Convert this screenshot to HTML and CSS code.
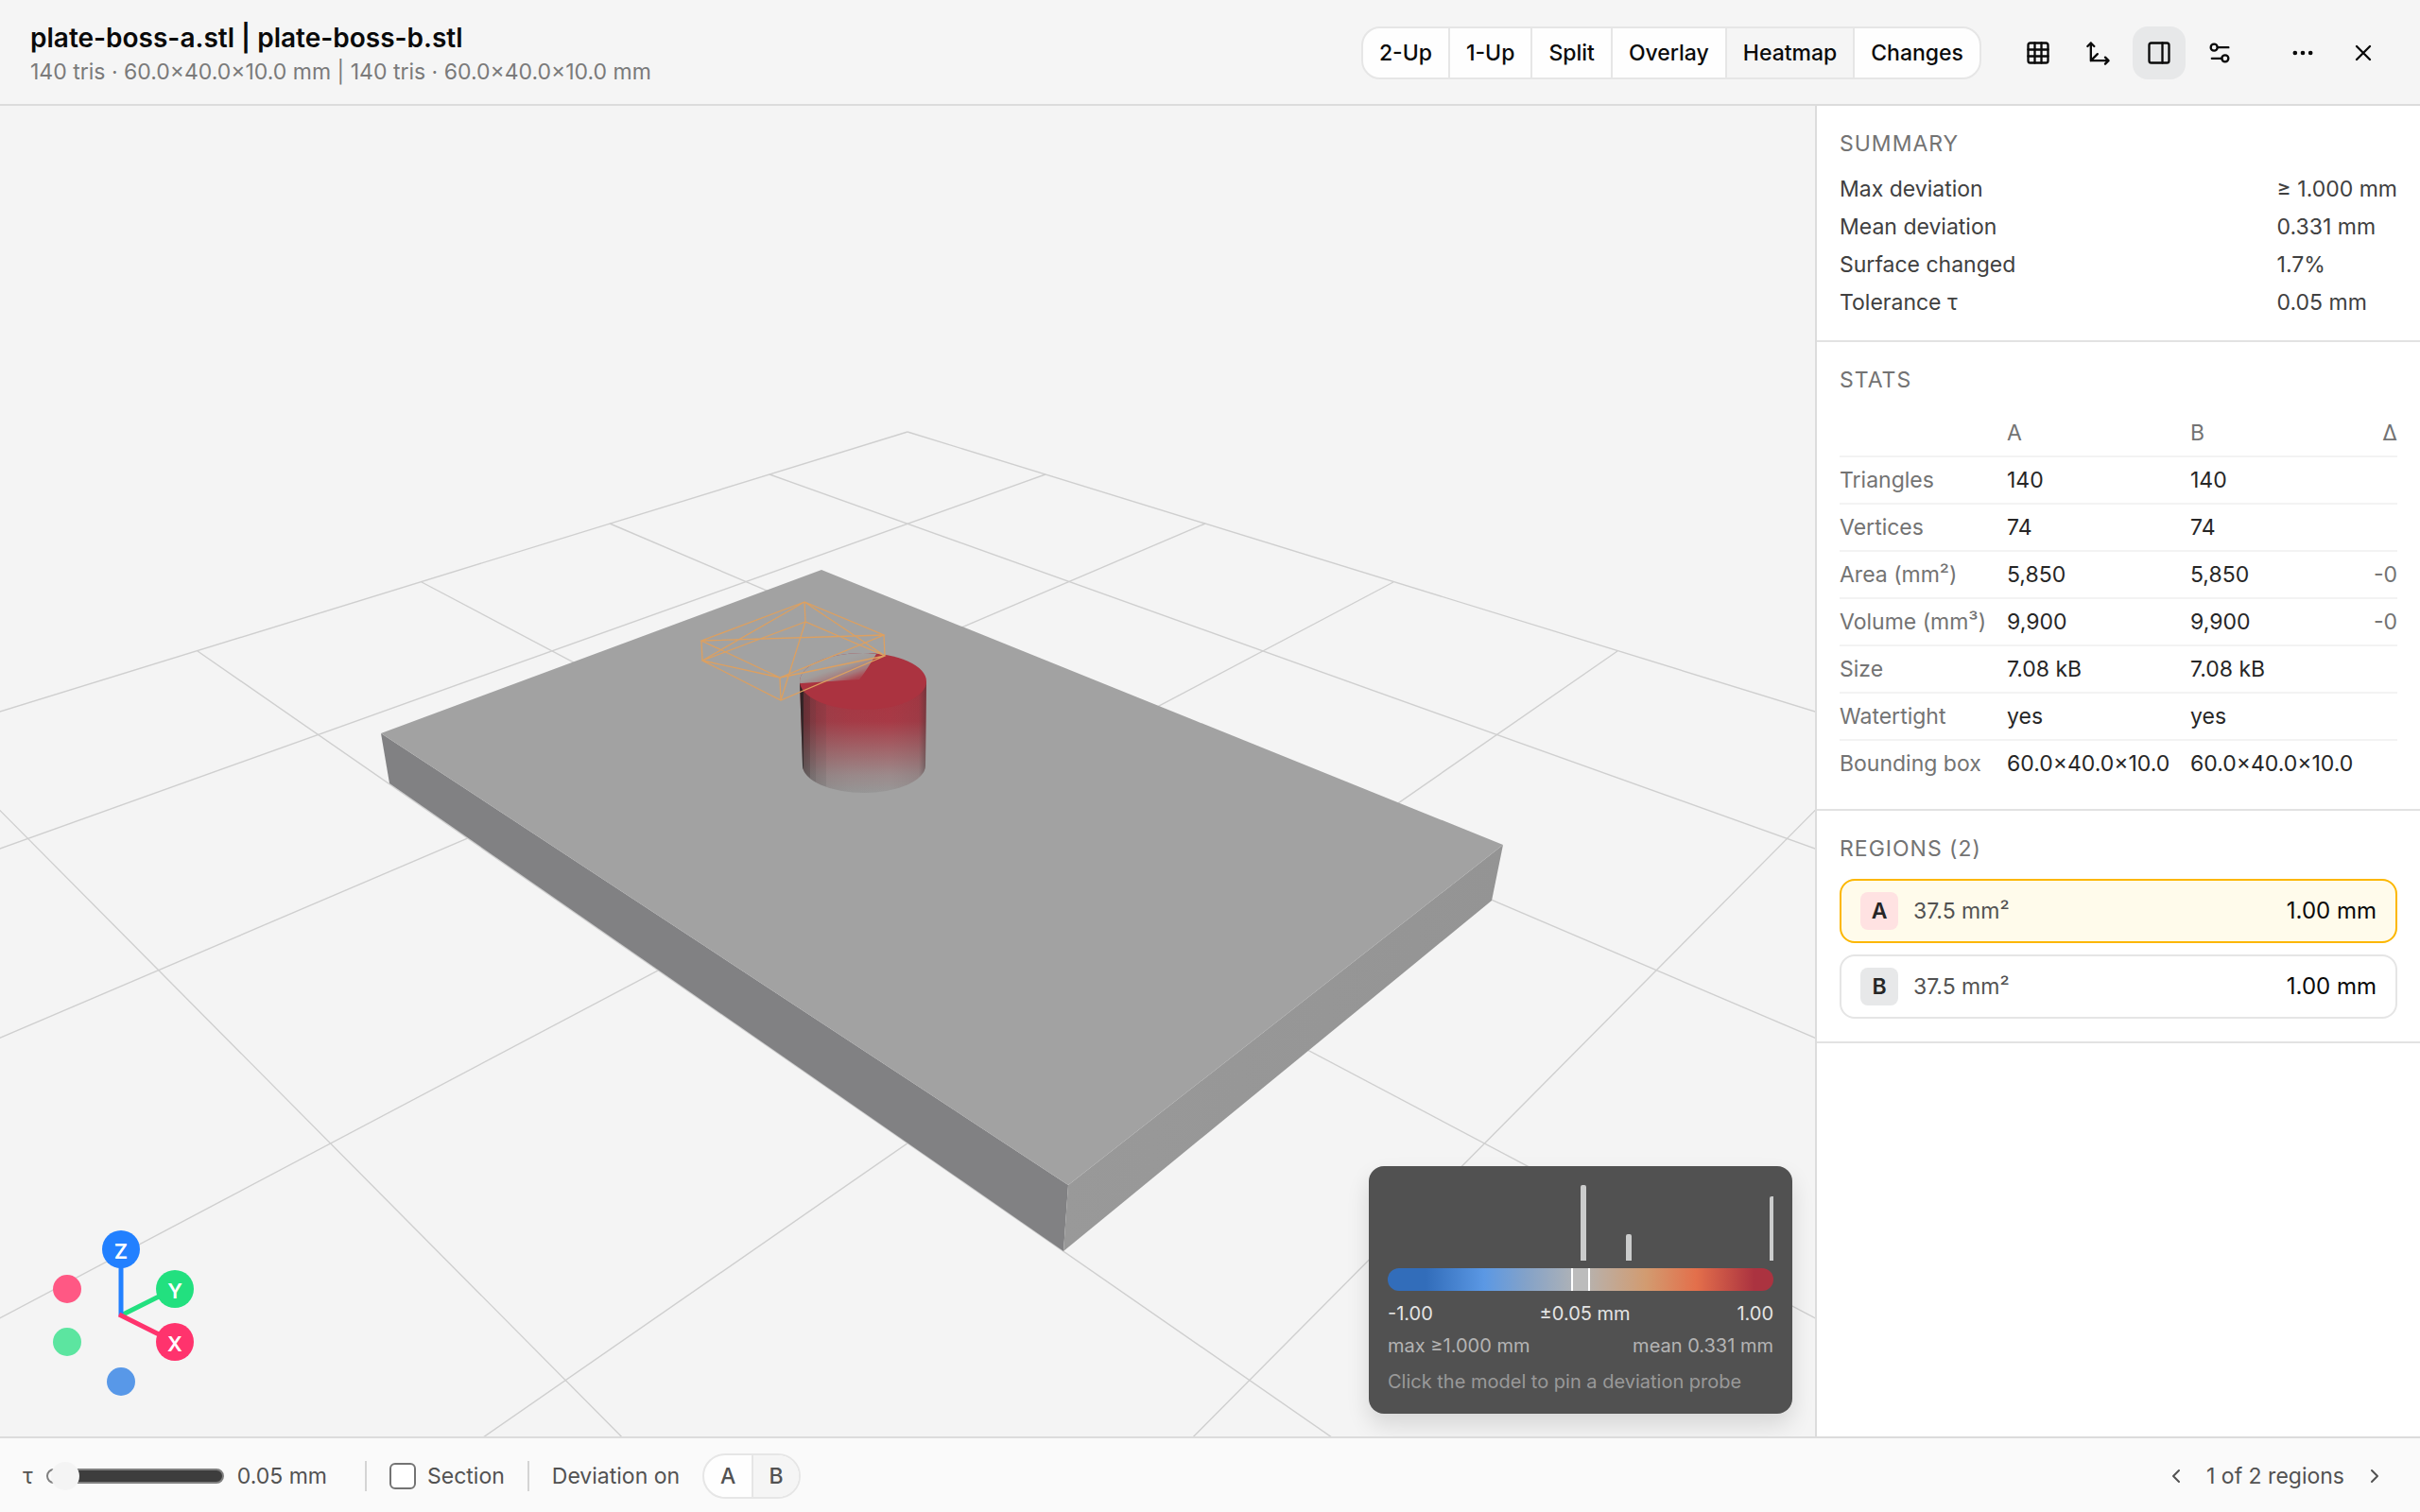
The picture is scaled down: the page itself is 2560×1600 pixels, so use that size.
FILE: index.html
```html
<!DOCTYPE html>
<html lang="en">
<head>
<meta charset="utf-8">
<title>plate-boss-a.stl | plate-boss-b.stl</title>
<link rel="stylesheet" href="styles.css">
</head>
<body>
<div class="app">
  <header class="topbar">
    <div class="titles">
      <h1 class="title">plate-boss-a.stl | plate-boss-b.stl</h1>
      <p class="subtitle">140 tris · 60.0×40.0×10.0 mm | 140 tris · 60.0×40.0×10.0 mm</p>
    </div>
    <div class="segmented" role="group" aria-label="View mode">
      <button type="button">2-Up</button>
      <button type="button">1-Up</button>
      <button type="button">Split</button>
      <button type="button">Overlay</button>
      <button type="button" class="selected" aria-pressed="true">Heatmap</button>
      <button type="button">Changes</button>
    </div>
    <div class="tools">
      <button type="button" class="icon-button" aria-label="Grid">
        <svg class="icon" viewBox="0 0 24 24"><rect x="3" y="3" width="18" height="18" rx="2"/><path d="M3 9h18M3 15h18M9 3v18M15 3v18"/></svg>
      </button>
      <button type="button" class="icon-button" aria-label="Axes">
        <svg class="icon" viewBox="0 0 24 24"><path d="M5 3v16h16M5 19l6-6M2 6l3-3 3 3M18 16l3 3-3 3"/></svg>
      </button>
      <button type="button" class="icon-button active" aria-label="Side panel" aria-pressed="true">
        <svg class="icon" viewBox="0 0 24 24"><rect x="3" y="3" width="18" height="18" rx="2"/><path d="M15 3v18"/></svg>
      </button>
      <button type="button" class="icon-button" aria-label="Settings">
        <svg class="icon" viewBox="0 0 24 24"><path d="M20 7h-9M14 17H5"/><circle cx="17" cy="17" r="3"/><circle cx="7" cy="7" r="3"/></svg>
      </button>
    </div>
    <div class="tools">
      <button type="button" class="icon-button" aria-label="More">
        <svg class="icon" viewBox="0 0 24 24"><circle cx="12" cy="12" r="1"/><circle cx="19" cy="12" r="1"/><circle cx="5" cy="12" r="1"/></svg>
      </button>
      <button type="button" class="icon-button" aria-label="Close">
        <svg class="icon" viewBox="0 0 24 24"><path d="M18 6L6 18M6 6l12 12"/></svg>
      </button>
    </div>
  </header>

  <main class="workspace">
    <section class="viewport" aria-label="3D view">
      <svg class="scene" viewBox="0 0 1920 1408" preserveAspectRatio="xMidYMid slice">
        <defs>
          <linearGradient id="side" x1="0" y1="0" x2="0" y2="1">
            <stop offset="0" stop-color="#aa3340"/>
            <stop offset="0.36" stop-color="#a83a46"/>
            <stop offset="0.62" stop-color="#a2666b"/>
            <stop offset="0.84" stop-color="#9c8a8b"/>
            <stop offset="1" stop-color="#989898"/>
          </linearGradient>
          <linearGradient id="shade" x1="0" y1="0" x2="1" y2="0">
            <stop offset="0" stop-color="#1c2020" stop-opacity="0.9"/>
            <stop offset="0.03" stop-color="#1c2020" stop-opacity="0.8"/>
            <stop offset="0.03" stop-color="#222626" stop-opacity="0.5"/>
            <stop offset="0.08" stop-color="#222626" stop-opacity="0.42"/>
            <stop offset="0.08" stop-color="#333838" stop-opacity="0.36"/>
            <stop offset="0.13" stop-color="#333838" stop-opacity="0.32"/>
            <stop offset="0.13" stop-color="#333838" stop-opacity="0.24"/>
            <stop offset="0.21" stop-color="#444848" stop-opacity="0.2"/>
            <stop offset="0.21" stop-color="#555555" stop-opacity="0.12"/>
            <stop offset="0.4" stop-color="#555555" stop-opacity="0.04"/>
            <stop offset="0.7" stop-color="#555555" stop-opacity="0"/>
            <stop offset="0.94" stop-color="#444444" stop-opacity="0.1"/>
            <stop offset="1" stop-color="#333333" stop-opacity="0.45"/>
          </linearGradient>
          <linearGradient id="wedge" gradientUnits="userSpaceOnUse" x1="881" y1="589" x2="889" y2="612">
            <stop offset="0" stop-color="#a2a2a2"/>
            <stop offset="0.3" stop-color="#a29c9a"/>
            <stop offset="0.7" stop-color="#a57a7c"/>
            <stop offset="1" stop-color="#aa4650"/>
          </linearGradient>
          <linearGradient id="end" x1="0" y1="0" x2="1" y2="0">
            <stop offset="0" stop-color="#999999"/>
            <stop offset="1" stop-color="#949494"/>
          </linearGradient>
          <clipPath id="cap"><ellipse cx="913" cy="609" rx="67" ry="30"/></clipPath>
        </defs>
        <g class="grid-lines">
          <path id="floor-lines" d="M960 345L-8793 3352M1106 390L-7168 3352M1275 442L-5542 3352M1474 504L-3917 3352M1711 577L-2291 3352M1999 666L-666 3352"/>
          <use href="#floor-lines" transform="matrix(-1 0 0 1 1920 0)"/>
        </g>
        <g class="slab">
          <path d="M403 664L1130 1142L1125 1212L412 717Z" fill="#818183"/>
          <path d="M1590 782L1578 841L1125 1212L1130 1142Z" fill="url(#end)"/>
          <path d="M869 491L1590 782L1130 1142L403 664Z" fill="#a2a2a2"/>
        </g>
        <g class="boss">
          <path d="M846 609L849 698A65 29 0 0 0 979 698L980 609Z" fill="url(#side)"/>
          <path d="M846 609L849 698A65 29 0 0 0 979 698L980 609Z" fill="url(#shade)"/>
          <ellipse cx="913" cy="609" rx="67" ry="30" fill="#ab3340"/>
          <path d="M840 612L848 611L909 607Q915 600 927 580L840 570Z" fill="url(#wedge)" clip-path="url(#cap)"/>
        </g>
        <path class="cage" d="M851 525L742 566L825 605L935 560ZM852 546L743 587L826 629L936 582ZM851 525L852 546M742 566L743 587M825 605L826 629M935 560L936 582M742 566L935 560M852 546L826 629M851 525L743 587M851 525L936 582M743 587L825 605M825 605L936 582"/>
      </svg>

      <svg class="gizmo" viewBox="0 0 144 184" role="img" aria-label="Orientation">
        <path d="M88 100L144 72" class="axis-y"/>
        <path d="M88 100V30" class="axis-z"/>
        <path d="M86 99L144 128" class="axis-x"/>
        <circle cx="31" cy="72" r="15" fill="#ff5884"/>
        <circle cx="31" cy="128" r="15" fill="#5ce5a0"/>
        <circle cx="88" cy="170" r="15" fill="#5898e8"/>
      </svg>
      <div class="gizmo-caps">
        <button type="button" class="cap cap-z">Z</button>
        <button type="button" class="cap cap-y">Y</button>
        <button type="button" class="cap cap-x">X</button>
      </div>

      <aside class="legend">
        <svg class="histogram" viewBox="0 0 408 80" preserveAspectRatio="none">
          <path d="M204 80V2a2 2 0 0 1 2-2h2a2 2 0 0 1 2 2V80ZM252 80V54a2 2 0 0 1 2-2h2a2 2 0 0 1 2 2V80ZM404 80V14a2 2 0 0 1 2-2h2V80Z"/>
        </svg>
        <div class="ramp"><span class="band"></span></div>
        <div class="legend-row scale"><span>-1.00</span><span>±0.05 mm</span><span>1.00</span></div>
        <div class="legend-row extremes"><span>max ≥1.000 mm</span><span>mean 0.331 mm</span></div>
        <p class="hint">Click the model to pin a deviation probe</p>
      </aside>
    </section>

    <aside class="panel">
      <section class="block">
        <h2>Summary</h2>
        <dl class="summary">
          <dt>Max deviation</dt><dd>≥ 1.000 mm</dd>
          <dt>Mean deviation</dt><dd>0.331 mm</dd>
          <dt>Surface changed</dt><dd>1.7%</dd>
          <dt>Tolerance τ</dt><dd>0.05 mm</dd>
        </dl>
      </section>
      <section class="block">
        <h2>Stats</h2>
        <table class="stats">
          <colgroup><col class="col-name"><col class="col-value"><col class="col-value"><col></colgroup>
          <thead><tr><th></th><th scope="col">A</th><th scope="col">B</th><th scope="col">Δ</th></tr></thead>
          <tbody>
            <tr><th scope="row">Triangles</th><td>140</td><td>140</td><td></td></tr>
            <tr><th scope="row">Vertices</th><td>74</td><td>74</td><td></td></tr>
            <tr><th scope="row">Area (mm²)</th><td>5,850</td><td>5,850</td><td>-0</td></tr>
            <tr><th scope="row">Volume (mm³)</th><td>9,900</td><td>9,900</td><td>-0</td></tr>
            <tr><th scope="row">Size</th><td>7.08 kB</td><td>7.08 kB</td><td></td></tr>
            <tr><th scope="row">Watertight</th><td>yes</td><td>yes</td><td></td></tr>
            <tr><th scope="row">Bounding box</th><td>60.0×40.0×10.0</td><td>60.0×40.0×10.0</td><td></td></tr>
          </tbody>
        </table>
      </section>
      <section class="block">
        <h2>Regions (2)</h2>
        <div class="regions">
          <button type="button" class="region current">
            <span class="badge badge-a">A</span><span class="area">37.5 mm²</span><span class="depth">1.00 mm</span>
          </button>
          <button type="button" class="region">
            <span class="badge">B</span><span class="area">37.5 mm²</span><span class="depth">1.00 mm</span>
          </button>
        </div>
      </section>
    </aside>
  </main>

  <footer class="statusbar">
    <div class="tolerance">
      <label for="tau">τ</label>
      <input id="tau" class="slider" type="range" min="0" max="100" value="2">
      <output for="tau">0.05 mm</output>
    </div>
    <span class="divider"></span>
    <label class="check"><input type="checkbox">Section</label>
    <span class="divider"></span>
    <span class="deviation">Deviation on</span>
    <div class="segmented small" role="group" aria-label="Deviation on">
      <button type="button">A</button>
      <button type="button" class="selected" aria-pressed="true">B</button>
    </div>
    <nav class="pager" aria-label="Regions">
      <button type="button" aria-label="Previous region"><svg class="chevron" viewBox="0 0 24 24"><path d="M15 18l-6-6 6-6"/></svg></button>
      <span>1 of 2 regions</span>
      <button type="button" aria-label="Next region"><svg class="chevron" viewBox="0 0 24 24"><path d="M9 18l6-6-6-6"/></svg></button>
    </nav>
  </footer>
</div>
</body>
</html>
```
FILE: styles.css
```css
* { box-sizing: border-box; }

body {
  margin: 0;
  font-family: Inter, "Liberation Sans", sans-serif;
  font-size: 23px;
  line-height: 32px;
  color: #404040;
  background: #f4f4f4;
}

h1, h2, p, dl, dd { margin: 0; }

button {
  font: inherit;
  color: inherit;
  margin: 0;
  padding: 0;
  border: 0;
  background: none;
}

.app {
  display: flex;
  flex-direction: column;
  height: 100vh;
}

/* Top bar */
.topbar {
  display: flex;
  align-items: center;
  gap: 32px;
  height: 112px;
  padding: 2px 32px 0;
  border-bottom: 2px solid #dcdcdc;
  background: #f5f5f5;
}

.titles {
  flex: 1;
  min-width: 0;
  padding-top: 4px;
}

.title {
  font-size: 28px;
  font-weight: 600;
  line-height: 36px;
  color: #0a0a0a;
}

.subtitle {
  color: #7a7a7a;
  line-height: 36px;
}

.segmented {
  display: flex;
  height: 56px;
  border: 2px solid #e6e6e6;
  border-radius: 20px;
  overflow: hidden;
  background: #fefefe;
}

.segmented button {
  padding: 0 17px;
  font-weight: 500;
  color: #0a0a0a;
}

.segmented button + button { border-left: 2px solid #e6e6e6; }
.segmented .selected { background: #f5f5f5; }

.tools { display: flex; gap: 8px; }

.icon-button {
  display: grid;
  place-items: center;
  width: 56px;
  height: 56px;
  border-radius: 16px;
  color: #0a0a0a;
}

.icon-button.active { background: #e7e8e9; }

.icon, .chevron {
  width: 28px;
  height: 28px;
  fill: none;
  stroke: currentColor;
  stroke-width: 2;
  stroke-linecap: round;
  stroke-linejoin: round;
}

/* Workspace */
.workspace {
  flex: 1;
  min-height: 0;
  display: grid;
  grid-template-columns: minmax(0, 3fr) minmax(0, 1fr);
}

.viewport {
  position: relative;
  overflow: hidden;
  background: #f4f4f4;
}

.scene {
  display: block;
  width: 100%;
  height: 100%;
}

.grid-lines {
  fill: none;
  stroke: #cfcfcf;
  stroke-width: 1.4;
}

.cage {
  fill: none;
  stroke: #dda060;
  stroke-width: 1.3;
}

.gizmo, .gizmo-caps {
  position: absolute;
  left: 40px;
  bottom: 44px;
  width: 144px;
  height: 184px;
  overflow: visible;
}

.gizmo path { fill: none; stroke-width: 5; }
.axis-x { stroke: #ff336d; }
.axis-y { stroke: #22e07f; }
.axis-z { stroke: #2280ff; }

.cap {
  position: absolute;
  width: 40px;
  height: 40px;
  border-radius: 50%;
  font-size: 22px;
  font-weight: 600;
  line-height: 44px;
  text-align: center;
  color: #fff;
}

.cap-z { left: 68px; top: 10px; background: #2280ff; }
.cap-y { left: 125px; top: 52px; background: #22e07f; }
.cap-x { left: 125px; top: 108px; background: #ff336d; }

.legend {
  position: absolute;
  right: 24px;
  bottom: 24px;
  width: 448px;
  padding: 20px;
  border-radius: 16px;
  background: #515151;
  box-shadow: 0 12px 24px rgba(0, 0, 0, 0.12);
  font-size: 20px;
  line-height: 28px;
}

.histogram {
  display: block;
  width: 100%;
  height: 80px;
  fill: #cbcccc;
}

.ramp {
  display: flex;
  justify-content: center;
  height: 24px;
  margin: 8px 0 10px;
  border-radius: 12px;
  background: linear-gradient(90deg, #326dba 0%, #326dba 10%, #5b98e4 25%, #84a2c8 36%, #b4b4b4 50%, #d29b70 67%, #e36f4b 80%, #ab3340 95%, #ab3340 100%);
}

.band {
  width: 20px;
  border: solid #fff;
  border-width: 0 2px;
  background: #bcbcbc;
}

.legend-row { display: flex; justify-content: space-between; }
.scale { color: #e4e4e4; }
.extremes { margin-top: 6px; color: #b4b4b4; }
.hint { margin-top: 10px; color: #999; }

/* Side panel */
.panel {
  border-left: 2px solid #dcdcdc;
  background: #fff;
}

.block {
  padding: 24px;
  border-bottom: 2px solid #e2e2e2;
}

.block h2 {
  margin-bottom: 16px;
  font-size: 23px;
  font-weight: 400;
  letter-spacing: 1px;
  text-transform: uppercase;
  color: #737373;
}

.summary {
  display: grid;
  grid-template-columns: 1fr auto;
  row-gap: 8px;
}

.stats {
  width: 100%;
  table-layout: fixed;
  border-collapse: separate;
  border-spacing: 0;
  color: #262626;
}

.col-name { width: 177px; }
.col-value { width: 194px; }

.stats th, .stats td {
  height: 50px;
  padding: 0;
  border-bottom: 2px solid #f3f3f3;
  font-weight: 400;
  text-align: left;
  white-space: nowrap;
}

.stats th { color: #737373; }
.stats th:last-child, .stats td:last-child { text-align: right; color: #737373; }
.stats tbody tr:last-child > * { height: 48px; border-bottom: 0; }

.regions { display: grid; gap: 12px; }

.region {
  display: flex;
  align-items: center;
  gap: 16px;
  height: 68px;
  padding: 0 20px;
  border: 2px solid #e5e5e5;
  border-radius: 16px;
}

.region.current {
  border-color: #fcb700;
  background: #fffbeb;
}

.badge {
  width: 40px;
  height: 40px;
  border-radius: 8px;
  line-height: 40px;
  font-weight: 600;
  text-align: center;
  color: #262626;
  background: #e7e8e9;
}

.badge-a { background: #ffe2e2; }
.area { flex: 1; text-align: left; color: #525252; }
.depth { font-size: 24px; color: #0a0a0a; }

/* Status bar */
.statusbar {
  display: flex;
  align-items: center;
  gap: 24px;
  height: 80px;
  padding: 2px 24px 0;
  border-top: 2px solid #dcdcdc;
  background: #fafafa;
  color: #525252;
}

.tolerance {
  display: flex;
  align-items: center;
  gap: 14px;
  width: 338px;
}

.slider {
  appearance: none;
  width: 188px;
  height: 16px;
  margin: 0;
  border: 2px solid #808080;
  border-radius: 8px;
  background: linear-gradient(90deg, #fafafa 20px, #3d3d3d 20px);
}

.slider::-webkit-slider-thumb {
  appearance: none;
  width: 30px;
  height: 30px;
  border-radius: 50%;
  background: #f4f4f4;
}

.divider {
  width: 2px;
  height: 32px;
  background: #d4d4d4;
}

.check {
  display: flex;
  align-items: center;
  gap: 12px;
}

.check input {
  appearance: none;
  width: 28px;
  height: 28px;
  margin: 0;
  border: 2px solid #737373;
  border-radius: 6px;
  background: #fff;
}

.small {
  height: 48px;
  border-radius: 24px;
}

.small button {
  width: 50px;
  padding: 0;
  color: #525252;
}

.pager {
  display: flex;
  align-items: center;
  gap: 8px;
  margin-left: auto;
}

.pager button {
  display: grid;
  place-items: center;
  width: 48px;
  height: 48px;
}

.chevron { width: 24px; height: 24px; }
```
